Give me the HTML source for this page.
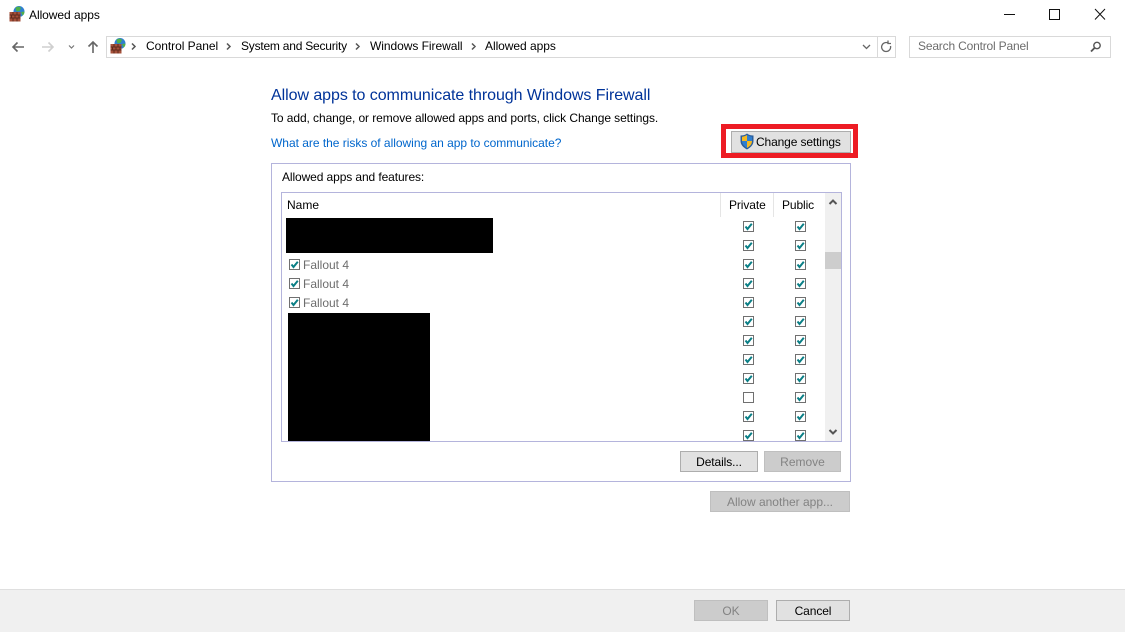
<!DOCTYPE html>
<html><head><meta charset="utf-8"><title>Allowed apps</title>
<style>
html,body{margin:0;padding:0;background:#fff}
body{width:1125px;height:632px;overflow:hidden;position:relative;font-family:"Liberation Sans",sans-serif;font-size:12px;color:#000}
.a{position:absolute;box-sizing:border-box}
.t{position:absolute;white-space:nowrap;line-height:16px}
.btn{position:absolute;box-sizing:border-box;border:1px solid #adadad;background:#e1e1e1;text-align:center;line-height:20px;white-space:nowrap;font-size:12px}
.dis{background:#ccc;border-color:#bfbfbf;color:#838383}
.cb{position:absolute;box-sizing:border-box;width:11px;height:11px;border:1px solid #707070;background:#fff}
.cb svg{position:absolute;left:0;top:0}
.g{color:#6d6d6d}
</style></head><body>
<svg width="0" height="0" style="position:absolute"><defs>
<symbol id="fw" viewBox="0 0 16 16">
<circle cx="10" cy="5.500" r="5.500" fill="#2f7fd0"/><path d="M6.500 2c2-2 4.500-1.500 5.500 0l-1.500 3-3 .5zM12 6l3.500-.5c0 2-1 3.500-2 4z" fill="#4fb04a"/>
<rect x="0.500" y="6" width="11" height="9.500" fill="#a5503a"/>
<path d="M.5 9h11M.5 12h11M4 6v3M8 6v3M2.500 9v3M6 9v3M10 9v3M4 12v3.500M8 12v3.500" stroke="#5e2a1c" stroke-width="1" fill="none"/>
</symbol>
<symbol id="ck" viewBox="0 0 9 9"><path d="M1.500 4.500L3.500 7L7.800 1.800" stroke="#0a7f86" stroke-width="2" fill="none"/></symbol>
</defs></svg>

<!-- Title bar -->
<svg class="a" style="left:9px;top:6px" width="16" height="16"><use href="#fw"/></svg>
<div class="t" style="left:29px;top:7px;letter-spacing:-.05px">Allowed apps</div>
<svg class="a" style="left:1000px;top:0" width="125" height="28" fill="none" stroke="#111" stroke-width="1">
<path d="M4 14.500h11"/><rect x="49.500" y="9.500" width="10" height="10"/><path d="M95 9l10 10.500M105 9L95 19.500"/>
</svg>

<!-- Nav -->
<svg class="a" style="left:10px;top:38px" width="95" height="18" fill="none">
<path d="M3 9h11M7.500 4.500L3 9l4.500 4.500" stroke="#666" stroke-width="1.600"/>
<path d="M32 9h11M38.500 4.500L43 9l-4.500 4.500" stroke="#cfcfcf" stroke-width="1.600"/>
<path d="M59 7.500l2.500 2.500L64 7.500" stroke="#777" stroke-width="1.200"/>
<path d="M83 15V4M78.500 8.500L83 4l4.500 4.500" stroke="#666" stroke-width="1.600"/>
</svg>
<div class="a" style="left:106px;top:36px;width:790px;height:22px;border:1px solid #d9d9d9"></div>
<div class="a" style="left:877px;top:37px;width:1px;height:20px;background:#d9d9d9"></div>
<svg class="a" style="left:110px;top:38px" width="16" height="16"><use href="#fw"/></svg>
<svg class="a" style="left:130px;top:36px" width="440" height="22" fill="none" stroke="#555" stroke-width="1.500">
<path d="M2 7.500l3 3-3 3M97 7.500l3 3-3 3M226 7.500l3 3-3 3M342 7.500l3 3-3 3"/>
</svg>
<div class="t" style="left:146px;top:38px;letter-spacing:-.05px">Control Panel</div>
<div class="t" style="left:241px;top:38px;letter-spacing:-.22px">System and Security</div>
<div class="t" style="left:370px;top:38px;letter-spacing:-.05px">Windows Firewall</div>
<div class="t" style="left:485px;top:38px;letter-spacing:-.05px">Allowed apps</div>
<svg class="a" style="left:860px;top:38px" width="36" height="18" fill="none" stroke="#666" stroke-width="1.300">
<path d="M3 7l3.500 3.500L10 7"/>
<path d="M30.500 8a4.500 4.500 0 1 1-2-2.800M28 2.500v3h3"/>
</svg>
<div class="a" style="left:909px;top:36px;width:202px;height:22px;border:1px solid #d9d9d9"></div>
<div class="t" style="left:918px;top:38px;color:#6d6d6d;letter-spacing:-.18px">Search Control Panel</div>
<svg class="a" style="left:1089px;top:40px" width="14" height="14" fill="none" stroke="#555" stroke-width="1.400">
<circle cx="8" cy="5.500" r="3.200"/><path d="M5.500 8L2 11.500" stroke-width="1.900"/>
</svg>

<!-- Heading -->
<div class="t" style="left:271px;top:87px;font-size:16px;line-height:18px;color:#003399;letter-spacing:-.06px">Allow apps to communicate through Windows Firewall</div>
<div class="t" style="left:271px;top:110px;letter-spacing:-.08px">To add, change, or remove allowed apps and ports, click Change settings.</div>
<div class="t" style="left:271px;top:135px;color:#0066cc;letter-spacing:-.02px">What are the risks of allowing an app to communicate?</div>

<!-- Change settings -->
<div class="a" style="left:721px;top:124px;width:137px;height:34px;border:5px solid #ed1c24"></div>
<div class="btn" style="left:731px;top:131px;width:120px;height:22px;line-height:20px;padding-left:24px;text-align:left;letter-spacing:-.13px">Change settings</div>
<svg class="a" style="left:739px;top:133px" width="16" height="17">
<path d="M8 .5C6 2 4 2.500 1.500 2.500V8c0 4 3 6.500 6.500 8.500 3.500-2 6.500-4.500 6.500-8.500V2.500C12 2.500 10 2 8 .5z" fill="#2a5d9c"/>
<path d="M8 2C6.500 3 5 3.500 3 3.700V8h5zM8 8v7c2.500-1.500 5-3.500 5-7z" fill="#f5b921"/>
<path d="M8 2v6h5V3.700C11 3.500 9.500 3 8 2zM3 8c0 3 2.500 5.500 5 7V8z" fill="#2f7fd0"/>
</svg>

<!-- Group -->
<div class="a" style="left:271px;top:163px;width:580px;height:319px;border:1px solid #b4b4dc"></div>
<div class="t" style="left:282px;top:169px;letter-spacing:-.1px">Allowed apps and features:</div>

<!-- List -->
<div class="a" style="left:281px;top:192px;width:561px;height:250px;border:1px solid #b4b4dc;overflow:hidden;background:#fff">
 <div class="a" style="left:438px;top:0;width:1px;height:24px;background:#e5e5e5"></div>
 <div class="a" style="left:491px;top:0;width:1px;height:24px;background:#e5e5e5"></div>
 <div class="t" style="left:5px;top:4px">Name</div>
 <div class="t" style="left:447px;top:4px;letter-spacing:-.1px">Private</div>
 <div class="t" style="left:500px;top:4px;letter-spacing:-.1px">Public</div>

 <div class="a" style="left:4px;top:25px;width:207px;height:35px;background:#000"></div>
 <div class="a" style="left:6px;top:120px;width:142px;height:130px;background:#000"></div>

 <div class="cb" style="left:7px;top:66px"><svg width="9" height="9"><use href="#ck"/></svg></div><div class="t g" style="left:21px;top:64px">Fallout 4</div>
 <div class="cb" style="left:7px;top:85px"><svg width="9" height="9"><use href="#ck"/></svg></div><div class="t g" style="left:21px;top:83px">Fallout 4</div>
 <div class="cb" style="left:7px;top:104px"><svg width="9" height="9"><use href="#ck"/></svg></div><div class="t g" style="left:21px;top:102px">Fallout 4</div>

 <div class="cb" style="left:461px;top:28px"><svg width="9" height="9"><use href="#ck"/></svg></div><div class="cb" style="left:513px;top:28px"><svg width="9" height="9"><use href="#ck"/></svg></div>
 <div class="cb" style="left:461px;top:47px"><svg width="9" height="9"><use href="#ck"/></svg></div><div class="cb" style="left:513px;top:47px"><svg width="9" height="9"><use href="#ck"/></svg></div>
 <div class="cb" style="left:461px;top:66px"><svg width="9" height="9"><use href="#ck"/></svg></div><div class="cb" style="left:513px;top:66px"><svg width="9" height="9"><use href="#ck"/></svg></div>
 <div class="cb" style="left:461px;top:85px"><svg width="9" height="9"><use href="#ck"/></svg></div><div class="cb" style="left:513px;top:85px"><svg width="9" height="9"><use href="#ck"/></svg></div>
 <div class="cb" style="left:461px;top:104px"><svg width="9" height="9"><use href="#ck"/></svg></div><div class="cb" style="left:513px;top:104px"><svg width="9" height="9"><use href="#ck"/></svg></div>
 <div class="cb" style="left:461px;top:123px"><svg width="9" height="9"><use href="#ck"/></svg></div><div class="cb" style="left:513px;top:123px"><svg width="9" height="9"><use href="#ck"/></svg></div>
 <div class="cb" style="left:461px;top:142px"><svg width="9" height="9"><use href="#ck"/></svg></div><div class="cb" style="left:513px;top:142px"><svg width="9" height="9"><use href="#ck"/></svg></div>
 <div class="cb" style="left:461px;top:161px"><svg width="9" height="9"><use href="#ck"/></svg></div><div class="cb" style="left:513px;top:161px"><svg width="9" height="9"><use href="#ck"/></svg></div>
 <div class="cb" style="left:461px;top:180px"><svg width="9" height="9"><use href="#ck"/></svg></div><div class="cb" style="left:513px;top:180px"><svg width="9" height="9"><use href="#ck"/></svg></div>
 <div class="cb" style="left:461px;top:199px"></div><div class="cb" style="left:513px;top:199px"><svg width="9" height="9"><use href="#ck"/></svg></div>
 <div class="cb" style="left:461px;top:218px"><svg width="9" height="9"><use href="#ck"/></svg></div><div class="cb" style="left:513px;top:218px"><svg width="9" height="9"><use href="#ck"/></svg></div>
 <div class="cb" style="left:461px;top:237px"><svg width="9" height="9"><use href="#ck"/></svg></div><div class="cb" style="left:513px;top:237px"><svg width="9" height="9"><use href="#ck"/></svg></div>

 <div class="a" style="left:543px;top:0;width:16px;height:248px;background:#f0f0f0"></div>
 <div class="a" style="left:543px;top:59px;width:16px;height:17px;background:#cdcdcd"></div>
 <svg class="a" style="left:543px;top:0" width="16" height="248" fill="none" stroke="#555" stroke-width="2">
  <path d="M4.500 11l3.500-3.500 3.500 3.500M4.500 237l3.500 3.500 3.500-3.500"/>
 </svg>
</div>

<div class="btn" style="left:680px;top:451px;width:78px;height:21px;letter-spacing:-.1px">Details...</div>
<div class="btn dis" style="left:764px;top:451px;width:77px;height:21px">Remove</div>
<div class="btn dis" style="left:710px;top:491px;width:140px;height:21px">Allow another app...</div>

<!-- Footer -->
<div class="a" style="left:0;top:589px;width:1125px;height:43px;background:#f0f0f0;border-top:1px solid #dfdfdf"></div>
<div class="btn dis" style="left:694px;top:600px;width:74px;height:21px">OK</div>
<div class="btn" style="left:776px;top:600px;width:74px;height:21px;letter-spacing:-.1px">Cancel</div>
</body></html>
